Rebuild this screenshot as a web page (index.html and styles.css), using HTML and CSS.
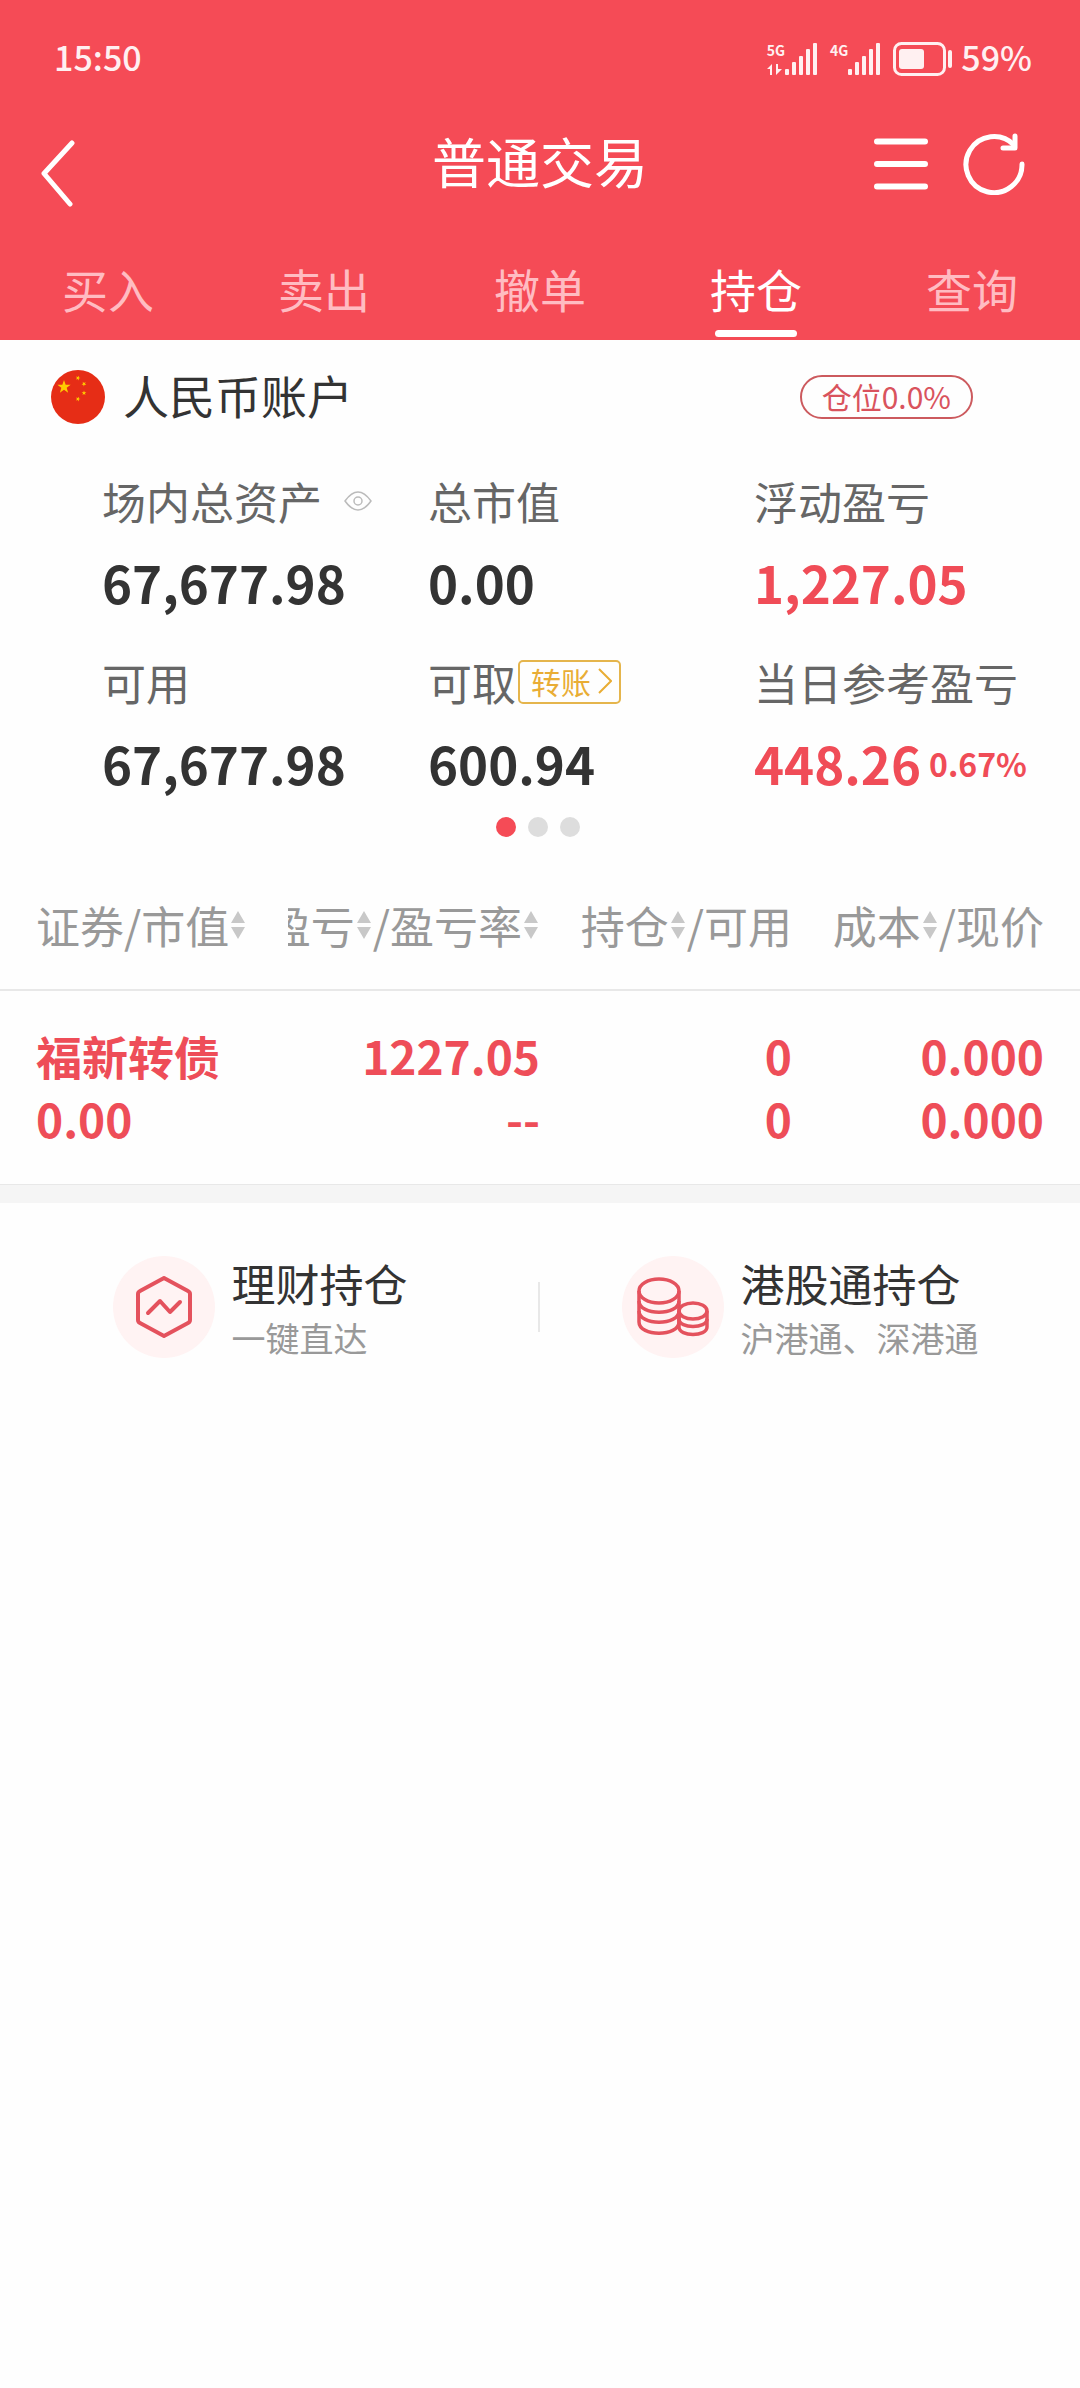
FILE: index.html
```html
<!DOCTYPE html>
<html lang="zh-CN">
  <head>
    <meta charset="utf-8" />
    <meta name="viewport" content="width=device-width, initial-scale=1" />
    <title>普通交易</title>
    <link rel="stylesheet" href="styles.css">
  </head>
  <body>
    <header class="header">
      <div class="status-bar">
        <span>15:50</span>
        <div class="status-icons">
          <div class="signal">
            <div class="network">
              <span>5G</span>
              <svg width="15" height="11" viewBox="0 0 15 11" fill="currentColor">
                <path d="M0 5L5 0V11H3V5ZM9 0V11L15 5H11V0Z" />
              </svg>
            </div>
            <svg width="33" height="32" viewBox="0 0 33 32" fill="currentColor">
              <rect x="0" y="26" width="4" height="6" rx="1" />
              <rect x="7" y="19" width="4" height="13" rx="1" />
              <rect x="14" y="13" width="4" height="19" rx="1" />
              <rect x="21" y="6" width="4" height="26" rx="1" />
              <rect x="28" y="0" width="4" height="32" rx="1" />
            </svg>
          </div>
          <div class="signal">
            <div class="network">
              <span>4G</span>
            </div>
            <svg width="33" height="32" viewBox="0 0 33 32" fill="currentColor">
              <rect x="0" y="26" width="4" height="6" rx="1" />
              <rect x="7" y="19" width="4" height="13" rx="1" />
              <rect x="14" y="13" width="4" height="19" rx="1" />
              <rect x="21" y="6" width="4" height="26" rx="1" />
              <rect x="28" y="0" width="4" height="32" rx="1" />
            </svg>
          </div>
          <svg width="60" height="34" viewBox="0 0 60 34" fill="currentColor">
            <rect x="1.5" y="1.5" width="50" height="31" rx="7" fill="none" stroke="currentColor" stroke-width="3" />
            <rect x="6" y="7" width="25" height="20" rx="3" />
            <rect x="55" y="8" width="4" height="18" rx="2" />
          </svg>
          <span>59%</span>
        </div>
      </div>

      <div class="nav-bar">
        <button class="icon-btn" aria-label="返回">
          <svg width="34" height="68" viewBox="0 0 34 68" fill="none" stroke="currentColor" stroke-width="5" stroke-linecap="round" stroke-linejoin="round">
            <path d="M31 4L3 34.500L29 65" />
          </svg>
        </button>
        <h1>普通交易</h1>
        <div class="nav-actions">
          <button class="icon-btn" aria-label="菜单">
            <svg width="54" height="54" viewBox="0 0 54 54" stroke="currentColor" stroke-width="6" stroke-linecap="round">
              <path d="M3 4.500H51M3 27H51M3 49.500H51" />
            </svg>
          </button>
          <button class="icon-btn" aria-label="刷新">
            <svg width="62" height="62" viewBox="0 0 62 62" fill="none" stroke="currentColor" stroke-width="5" stroke-linecap="round" stroke-linejoin="round">
              <path d="M59 31A28 28 0 1 1 51 12" />
              <path d="M52 3V15H40" />
            </svg>
          </button>
        </div>
      </div>

      <nav class="tabs">
        <a href="#buy">买入</a>
        <a href="#sell">卖出</a>
        <a href="#cancel">撤单</a>
        <a href="#position" class="active">持仓</a>
        <a href="#query">查询</a>
      </nav>
    </header>

    <main>
      <section class="account">
        <div class="account-head">
          <svg width="54" height="54" viewBox="0 0 54 54">
            <defs>
              <path id="star" d="M0 -7L1.650 -2.270 6.660 -2.160 2.670 0.870 4.110 5.660 0 2.800 -4.110 5.660 -2.670 0.870 -6.660 -2.160 -1.650 -2.270Z" fill="#fc0" />
            </defs>
            <circle cx="27" cy="27" r="27" fill="#e62d16" />
            <use href="#star" transform="translate(13 17)" />
            <use href="#star" transform="translate(27 8) scale(.36) rotate(20)" />
            <use href="#star" transform="translate(33 14) scale(.36) rotate(40)" />
            <use href="#star" transform="translate(33 23) scale(.36)" />
            <use href="#star" transform="translate(27 29) scale(.36) rotate(20)" />
          </svg>
          <h2>人民币账户</h2>
          <span class="pill">仓位0.0%</span>
        </div>

        <dl class="stats">
          <div>
            <dt>
              场内总资产
              <button class="eye-btn" aria-label="隐藏金额">
                <svg width="28" height="20" viewBox="0 0 28 20" fill="none" stroke="#bbb" stroke-width="1.500">
                  <path d="M1 10Q14 -8 27 10Q14 28 1 10Z" />
                  <circle cx="14" cy="10" r="4" />
                </svg>
              </button>
            </dt>
            <dd>67,677.98</dd>
          </div>
          <div>
            <dt>总市值</dt>
            <dd>0.00</dd>
          </div>
          <div>
            <dt>浮动盈亏</dt>
            <dd class="up">1,227.05</dd>
          </div>
          <div>
            <dt>可用</dt>
            <dd>67,677.98</dd>
          </div>
          <div>
            <dt>
              可取
              <a href="#transfer" class="transfer">
                转账
                <svg width="14" height="26" viewBox="0 0 14 26" fill="none" stroke="currentColor" stroke-width="2">
                  <path d="M1 1L13 13L1 25" />
                </svg>
              </a>
            </dt>
            <dd>600.94</dd>
          </div>
          <div>
            <dt>当日参考盈亏</dt>
            <dd class="up">448.26 <small>0.67%</small></dd>
          </div>
        </dl>

        <div class="dots">
          <button class="active" aria-label="第1页"></button>
          <button aria-label="第2页"></button>
          <button aria-label="第3页"></button>
        </div>
      </section>

      <svg class="defs">
        <symbol id="sort" viewBox="0 0 14 28">
          <path d="M7 0L14 12H0ZM0 16H14L7 28Z" fill="#c8c8c8" />
        </symbol>
      </svg>

      <table class="positions">
        <thead>
          <tr>
            <th><button>证券/市值<svg class="sort"><use href="#sort" /></svg></button></th>
            <th><button>盈亏<svg class="sort"><use href="#sort" /></svg>/盈亏率<svg class="sort"><use href="#sort" /></svg></button></th>
            <th><button>持仓<svg class="sort"><use href="#sort" /></svg>/可用</button></th>
            <th><button>成本<svg class="sort"><use href="#sort" /></svg>/现价</button></th>
          </tr>
        </thead>
        <tbody>
          <tr>
            <td>福新转债<br>0.00</td>
            <td>1227.05<br>--</td>
            <td>0<br>0</td>
            <td>0.000<br>0.000</td>
          </tr>
        </tbody>
      </table>

      <section class="links">
        <a href="#wealth">
          <span class="link-icon">
            <svg width="56" height="62" viewBox="0 0 56 62" fill="none" stroke="#e4525d" stroke-width="4" stroke-linecap="round" stroke-linejoin="round">
              <path d="M28 2L52 15Q54 16 54 18V44Q54 46 52 47L28 60L4 47Q2 46 2 44V18Q2 16 4 15Z" />
              <path d="M12 37L24 25L34 36L44 26" />
            </svg>
          </span>
          <span class="link-text">
            <strong>理财持仓</strong>
            <span>一键直达</span>
          </span>
        </a>
        <a href="#hk">
          <span class="link-icon">
            <svg width="72" height="60" viewBox="0 0 72 60" fill="none" stroke="#e4525d" stroke-width="3.500">
              <ellipse cx="22" cy="14" rx="20" ry="12" />
              <path d="M2 14V45C2 60 42 60 42 45V14" />
              <path d="M2 24C2 39 42 39 42 24M2 34C2 49 42 49 42 34" />
              <ellipse cx="56" cy="34" rx="14" ry="8" />
              <path d="M42 34V50C42 60 70 60 70 50V34" />
              <path d="M42 42C42 52 70 52 70 42" />
            </svg>
          </span>
          <span class="link-text">
            <strong>港股通持仓</strong>
            <span>沪港通、深港通</span>
          </span>
        </a>
      </section>
    </main>
  </body>
</html>
```
FILE: styles.css
```css
* {
  margin: 0;
  padding: 0;
  box-sizing: border-box;
}

body {
  min-height: 100vh;
  font-family: "Noto Sans CJK SC", "Noto Sans", sans-serif;
  font-size: 44px;
  color: #333;
  background: #fefefe;
}

svg {
  display: block;
  flex-shrink: 0;
}

a {
  color: inherit;
  text-decoration: none;
}

button {
  border: none;
  background: transparent;
  font: inherit;
  color: inherit;
  cursor: pointer;
}

/* header */
.header {
  background: #f54b56;
  color: #fff;
}

.status-bar {
  display: flex;
  justify-content: space-between;
  align-items: center;
  height: 118px;
  padding: 0 48px 0 54px;
  font-size: 34px;
  line-height: 52px;
  color: #fff0f1;
}

.status-bar > span,
.status-icons > span {
  padding-bottom: 4px;
  font-weight: 500;
}

.status-icons {
  display: flex;
  align-items: center;
  gap: 8px;
}

.signal {
  display: flex;
  align-items: stretch;
  margin-right: 4px;
}

.network {
  display: flex;
  flex-direction: column;
  justify-content: space-between;
  height: 32px;
  font-size: 14px;
  font-weight: 700;
  line-height: 14px;
}

.nav-bar {
  display: grid;
  grid-template-columns: 1fr auto 1fr;
  align-items: center;
  height: 92px;
  padding: 0 41px;
}

.nav-bar h1 {
  font-size: 54px;
  font-weight: 400;
  line-height: 76px;
  padding-bottom: 6px;
}

.nav-bar > .icon-btn {
  justify-self: start;
  padding-top: 18px;
}

.nav-actions {
  display: flex;
  justify-content: flex-end;
  align-items: center;
  gap: 35px;
  padding-right: 14px;
}

.tabs {
  display: grid;
  grid-template-columns: repeat(5, 1fr);
  height: 130px;
}

.tabs a {
  display: flex;
  flex-direction: column;
  justify-content: space-between;
  align-items: center;
  padding: 45px 0 3px;
  font-size: 46px;
  line-height: 66px;
  color: #ffbcc2;
}

.tabs .active {
  color: #fff;
}

.tabs .active::after {
  content: "";
  width: 82px;
  height: 7px;
  border-radius: 4px;
  background: #fff;
}

/* account summary */
.account-head {
  display: flex;
  align-items: center;
  height: 114px;
  padding: 0 107px 0 51px;
}

.account-head h2 {
  padding: 0 0 6px 18px;
  font-size: 46px;
  font-weight: 400;
}

.pill {
  margin-left: auto;
  padding: 0 20px 2px;
  border: 2px solid #cc5a5e;
  border-radius: 22px;
  font-size: 30px;
  line-height: 38px;
  color: #d9535d;
}

.stats {
  display: grid;
  grid-template-columns: repeat(3, 1fr);
  row-gap: 30px;
  padding: 17px 0 0 102px;
}

.stats dt {
  display: flex;
  align-items: center;
  height: 60px;
  margin-bottom: 11px;
  color: #666;
  white-space: nowrap;
}

.stats dd {
  display: flex;
  align-items: center;
  gap: 8px;
  height: 80px;
  font-size: 51px;
  font-weight: 700;
  white-space: nowrap;
}

.stats small {
  font-size: 32px;
}

.stats .up {
  color: #f04c57;
}

.eye-btn {
  margin-left: 22px;
}

.transfer {
  display: flex;
  align-items: center;
  gap: 7px;
  margin-left: 2px;
  padding: 0 7px 2px 11px;
  border: 2px solid #e5b54c;
  border-radius: 5px;
  font-size: 30px;
  line-height: 38px;
  color: #e9ad35;
}

.dots {
  display: flex;
  justify-content: center;
  gap: 12px;
  padding: 14px 4px 20px 0;
}

.dots button {
  width: 20px;
  height: 20px;
  border-radius: 50%;
  background: #ddd;
}

.dots .active {
  background: #f54b56;
}

/* positions table */
.defs {
  display: none;
}

.positions {
  display: block;
}

.positions thead,
.positions tbody {
  display: block;
  padding: 0 36px;
}

.positions thead {
  border-bottom: 2px solid #e8e8e8;
}

.positions tbody {
  padding-top: 33px;
  padding-bottom: 34px;
  border-bottom: 1px solid #e8e8e8;
}

.positions tr {
  display: grid;
  grid-template-columns: repeat(4, 1fr);
}

.positions th {
  display: flex;
  justify-content: flex-end;
  height: 132px;
  padding-top: 3px;
  overflow: hidden;
  font-weight: 400;
  color: #999;
}

.positions th button {
  display: flex;
  flex-shrink: 0;
  align-items: center;
  white-space: nowrap;
}

.positions th:first-child {
  justify-content: flex-start;
}

.sort {
  width: 14px;
  height: 28px;
  margin: 0 2px;
}

.positions td {
  font-size: 46px;
  font-weight: 700;
  line-height: 63px;
  text-align: right;
  color: #ee4d58;
}

.positions td:first-child {
  text-align: left;
}

/* bottom links */
.links {
  display: grid;
  grid-template-columns: 1fr 1fr;
  border-top: 18px solid #f5f5f5;
}

.links a {
  display: flex;
  justify-content: center;
  align-items: center;
  gap: 17px;
  height: 208px;
  padding-right: 20px;
  background: linear-gradient(#e8e8e8, #e8e8e8) right center / 2px 50px no-repeat;
}

.links a:last-child {
  background: none;
}

.link-icon {
  display: flex;
  justify-content: center;
  align-items: center;
  width: 102px;
  height: 102px;
  border-radius: 50%;
  background: #fff3f3;
}

.link-text {
  display: flex;
  flex-direction: column;
  padding-top: 3px;
  font-size: 34px;
  line-height: 52px;
  color: #999;
}

.link-text strong {
  font-size: 44px;
  font-weight: 400;
  line-height: 58px;
  color: #333;
}
```
